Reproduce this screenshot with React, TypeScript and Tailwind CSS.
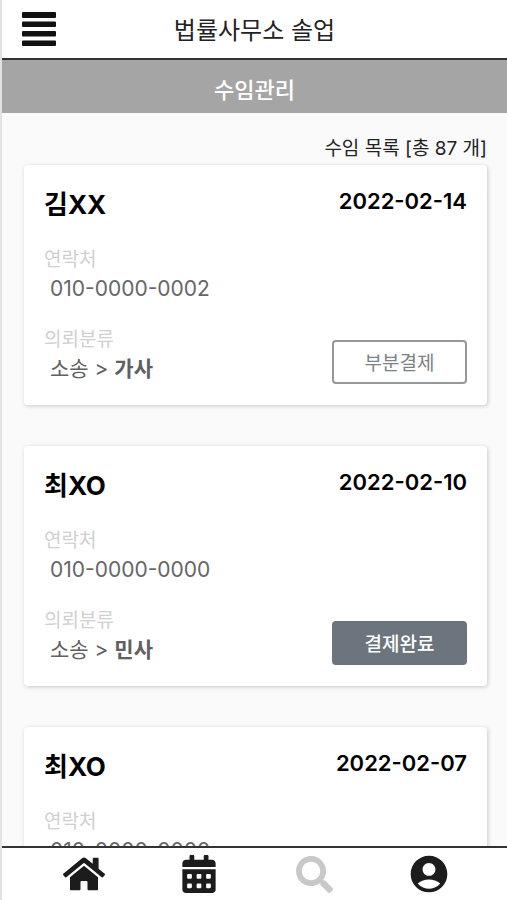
import { FaCalendarAlt, FaHome, FaSearch } from 'react-icons/fa'
import { MdAccountCircle } from 'react-icons/md'

type Contract = {
  name: string
  date: string
  phone: string
  category: string
  status: '부분결제' | '결제완료'
}

const contracts: Contract[] = [
  { name: '김XX', date: '2022-02-14', phone: '010-0000-0002', category: '가사', status: '부분결제' },
  { name: '최XO', date: '2022-02-10', phone: '010-0000-0000', category: '민사', status: '결제완료' },
  { name: '최XO', date: '2022-02-07', phone: '010-0000-0000', category: '민사', status: '결제완료' },
]

function ContractCard({ contract }: { contract: Contract }) {
  const paid = contract.status === '결제완료'

  return (
    <li className="rounded-sm bg-white px-5 pt-5 pb-[21px] shadow-[1px_1px_4px_rgba(0,0,0,0.2)]">
      <div className="flex items-start justify-between">
        <h2 className="text-[26px] leading-10 font-bold text-black">{contract.name}</h2>
        <time className="text-[22px] leading-8 font-semibold text-black">{contract.date}</time>
      </div>
      <div className="mt-[21px] flex items-end justify-between">
        <dl>
          <dt className="text-[19px] leading-7 text-[#d0d0d0]">연락처</dt>
          <dd className="pl-[6px] text-[21px] leading-[30px] text-[#666]">{contract.phone}</dd>
          <dt className="mt-[22px] text-[19px] leading-7 text-[#d0d0d0]">의뢰분류</dt>
          <dd className="pl-[6px] text-[21px] leading-[30px] text-[#606060]">
            소송 &gt; <b>{contract.category}</b>
          </dd>
        </dl>
        <button
          type="button"
          className={
            paid
              ? 'h-11 w-[135px] rounded-sm border-2 border-[#6c757d] bg-[#6c757d] pt-1 text-[19px] font-medium text-white'
              : 'h-11 w-[135px] rounded-sm border-2 border-[#94989c] bg-white pt-1 text-[19px] text-[#7c8185]'
          }
        >
          {contract.status}
        </button>
      </div>
    </li>
  )
}

export default function App() {
  return (
    <div className="flex h-screen flex-col border-l-2 border-[#e2e2e2] bg-[#fafafa] font-['Inter','Noto_Sans_CJK_KR',sans-serif] text-[#222]">
      {/* Header */}
      <header className="grid h-[60px] shrink-0 grid-cols-[1fr_auto_1fr] items-center border-b-2 border-[#333] bg-white px-5">
        <button type="button" aria-label="메뉴" className="w-[34px]">
          <svg className="h-[34px] w-[34px]" viewBox="0 0 34 34" fill="#111">
            <rect width="34" height="6" rx="1" />
            <rect y="9.5" width="34" height="5.5" rx="1" />
            <rect y="19" width="34" height="5.5" rx="1" />
            <rect y="28.5" width="34" height="5.5" rx="1" />
          </svg>
        </button>
        <h1 className="pt-1 text-2xl">법률사무소 솔업</h1>
        <span />
      </header>

      <div className="flex h-[53px] shrink-0 items-center justify-center bg-[#a6a5a5] pt-2 text-[22px] font-medium text-white">
        수임관리
      </div>

      {/* Contract list */}
      <main className="min-h-0 flex-1 overflow-y-auto px-5 [scrollbar-width:none]">
        <p className="pt-5 text-right text-[19px] leading-8">수임 목록 [총 87 개]</p>
        <ul className="ml-[2px] flex flex-col gap-[41px] pb-10">
          {contracts.map((contract) => (
            <ContractCard key={contract.date} contract={contract} />
          ))}
        </ul>
      </main>

      {/* Bottom nav */}
      <nav className="grid h-[54px] shrink-0 grid-cols-4 items-center justify-items-center border-t-2 border-[#333] bg-white pt-1 pr-5 pb-1 pl-6 text-[#1c1c1c]">
        <a href="#home" aria-label="홈">
          <FaHome className="h-[38px] w-[42px]" />
        </a>
        <a href="#calendar" aria-label="일정">
          <FaCalendarAlt className="h-[38px] w-[34px]" />
        </a>
        <a href="#search" aria-label="검색" className="text-[#c8c8c8]">
          <FaSearch className="h-[37px] w-[37px]" />
        </a>
        <a href="#account" aria-label="내 정보">
          <MdAccountCircle className="h-11 w-11" />
        </a>
      </nav>
    </div>
  )
}
